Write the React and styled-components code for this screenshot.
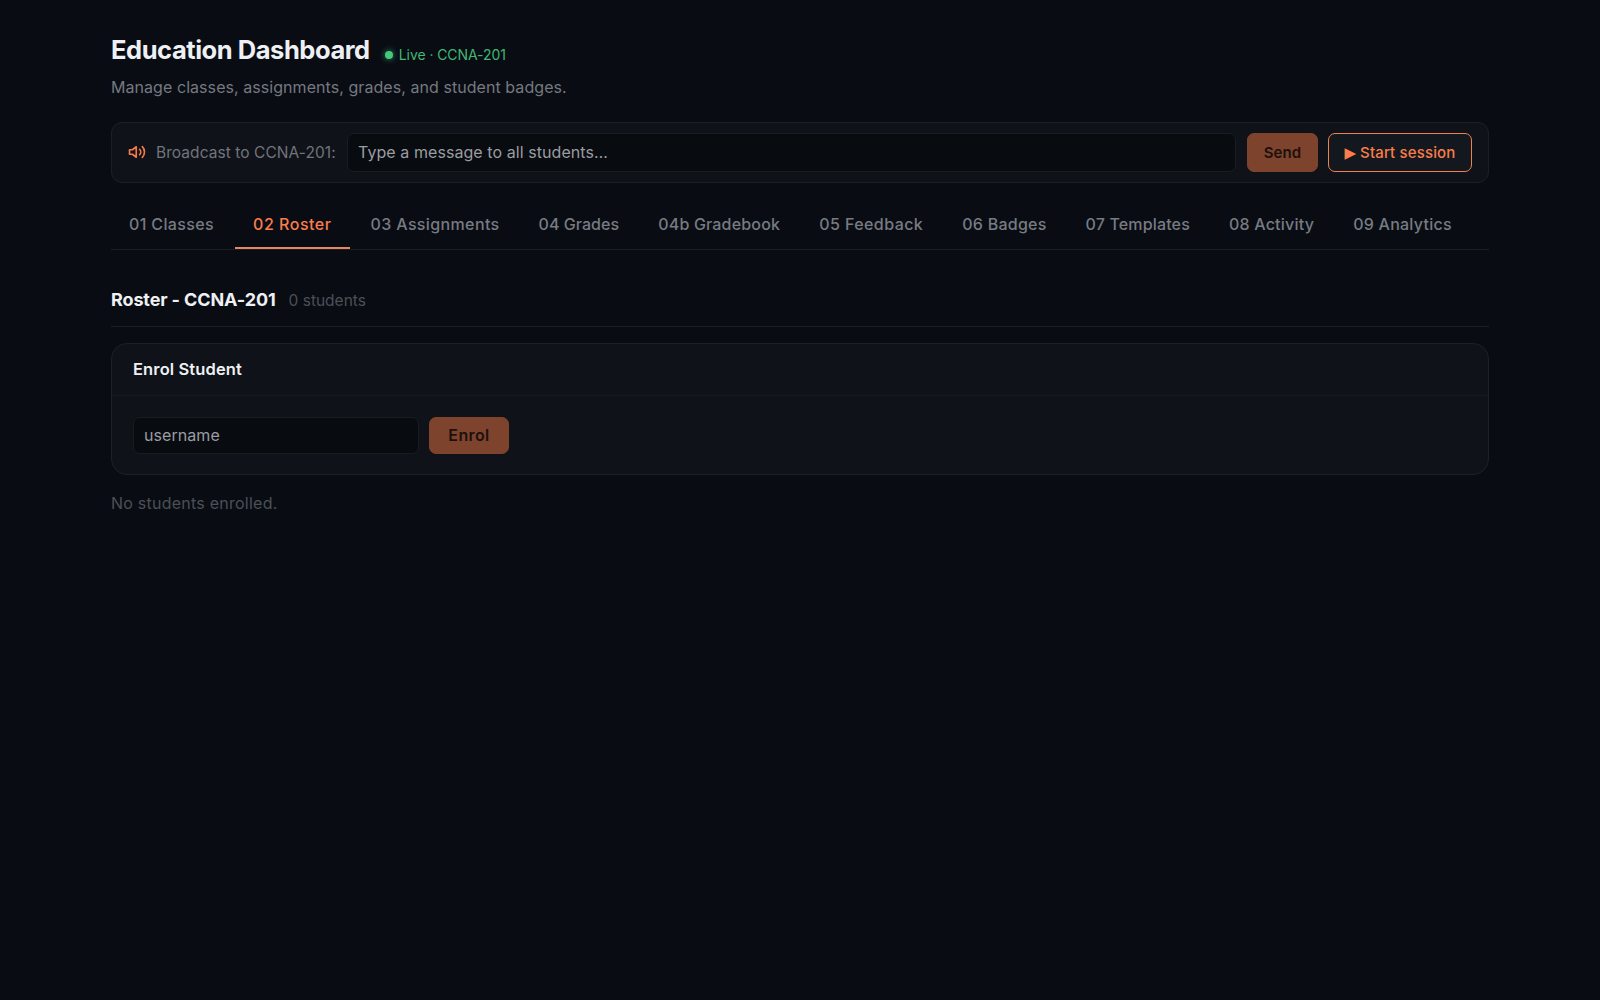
import React, { useState } from "react";
import styled, { createGlobalStyle } from "styled-components";

const GlobalStyle = createGlobalStyle`
  * {
    box-sizing: border-box;
  }
  body {
    margin: 0;
    background: #090c13;
    color: #eef0f3;
    font-family: Inter, sans-serif;
    font-size: 16px;
  }
  input, button {
    font-family: inherit;
    margin: 0;
  }
`;

const Page = styled.main`
  width: 1378px;
  min-height: 1000px;
  margin: 0 auto;
  padding-top: 34px;
`;

const TitleRow = styled.div`
  display: flex;
  align-items: baseline;
  height: 32px;
`;

const Title = styled.h1`
  margin: 0;
  font-size: 25.5px;
  font-weight: 650;
  line-height: 32px;
  letter-spacing: -0.45px;
`;

const Live = styled.span`
  display: inline-flex;
  align-items: center;
  gap: 6px;
  margin-left: 15px;
  font-size: 14px;
  line-height: 20px;
  letter-spacing: -0.07px;
  color: #3fb873;
`;

const Dot = styled.span`
  width: 8px;
  height: 8px;
  border-radius: 50%;
  background: #45c97c;
  box-shadow: 0 0 6px #2f9c5e;
`;

const Subtitle = styled.p`
  margin: 9px 0 0;
  line-height: 24px;
  letter-spacing: 0.06px;
  color: #757980;
`;

const Broadcast = styled.section`
  display: flex;
  align-items: center;
  height: 61px;
  margin-top: 23px;
  padding: 10px 16px;
  background: #0f1218;
  border: 1px solid #1d2023;
  border-radius: 11px;
`;

const BroadcastLabel = styled.label`
  width: 191px;
  margin-left: 10px;
  font-size: 15.5px;
  letter-spacing: 0.06px;
  white-space: nowrap;
  color: #71757c;
`;

const Input = styled.input`
  width: ${(p) => p.$width || "auto"};
  flex: ${(p) => (p.$width ? "none" : 1)};
  height: ${(p) => p.$height}px;
  padding: 0 10px 2px;
  background: #080b10;
  border: 1px solid #191c20;
  border-radius: 7px;
  outline: none;
  color: #eef0f3;
  font-size: 16px;
  letter-spacing: 0.07px;
  &::placeholder {
    color: #9b9da1;
    opacity: 1;
  }
`;

const Button = styled.button`
  display: flex;
  align-items: center;
  justify-content: center;
  width: ${(p) => p.$width}px;
  height: ${(p) => p.$height}px;
  margin-left: ${(p) => p.$gap || 10}px;
  padding: 0 0 ${(p) => p.$lift || 0}px;
  border: 1px solid ${(p) => (p.$outline ? "#ef8054" : "#7d432c")};
  border-radius: 7px;
  background: ${(p) => (p.$outline ? "#13181e" : "#7d432c")};
  color: ${(p) => (p.$outline ? "#fa7d4b" : "#1c100c")};
  font-size: ${(p) => p.$size || 15}px;
  font-weight: ${(p) => (p.$outline ? 500 : 600)};
  letter-spacing: ${(p) => p.$spacing}px;
  white-space: nowrap;
`;

const Play = styled.span`
  margin-right: 4px;
  font-family: "DejaVu Sans", sans-serif;
  letter-spacing: 0;
  line-height: 18px;
`;

const Tabs = styled.nav`
  display: flex;
  gap: 3px;
  height: 51px;
  margin-top: 16px;
  border-bottom: 1px solid #1b1e21;
`;

const Tab = styled.button`
  height: 50px;
  padding: 2px 18px 0;
  background: none;
  border: none;
  border-bottom: 2px solid ${(p) => (p.$active ? "#e88662" : "transparent")};
  color: ${(p) => (p.$active ? "#fa7d4b" : "#777b82")};
  font-size: 16px;
  font-weight: 530;
  letter-spacing: ${(p) => p.$spacing}px;
  white-space: nowrap;
`;

const SectionHead = styled.div`
  display: flex;
  align-items: baseline;
  gap: 13px;
  height: 77px;
  padding-top: 38px;
  border-bottom: 1px solid #1b1e21;
`;

const SectionTitle = styled.h2`
  margin: 0;
  font-size: 18px;
  font-weight: 650;
  line-height: 24px;
  letter-spacing: -0.12px;
`;

const Count = styled.span`
  font-size: 15.5px;
  letter-spacing: 0;
  color: #4c5057;
`;

const Card = styled.section`
  height: 132px;
  margin-top: 16px;
  background: #0f1218;
  border: 1px solid #1e2124;
  border-radius: 16px;
`;

const CardHead = styled.h3`
  display: flex;
  align-items: center;
  height: 52px;
  margin: 0;
  padding: 0 21px 2px;
  border-bottom: 1px solid #171b20;
  font-size: 16.5px;
  font-weight: 600;
  letter-spacing: 0.12px;
`;

const CardBody = styled.div`
  display: flex;
  padding: 21px;
`;

const Empty = styled.p`
  margin: 16px 0 0;
  line-height: 24px;
  letter-spacing: 0.24px;
  color: #4c5057;
`;

const Speaker = styled.svg`
  flex: none;
  margin-bottom: 2px;
`;

// label, letter spacing
const tabs = [
  ["01 Classes", 0.37],
  ["02 Roster", 0.52],
  ["03 Assignments", 0.37],
  ["04 Grades", 0.05],
  ["04b Gradebook", 0.18],
  ["05 Feedback", 0.43],
  ["06 Badges", 0.25],
  ["07 Templates", 0.15],
  ["08 Activity", 0.22],
  ["09 Analytics", 0.25],
];

function SpeakerIcon() {
  return (
    <Speaker
      width="18"
      height="18"
      viewBox="0 0 24 24"
      fill="none"
      stroke="#f47a49"
      strokeWidth="2.2"
      strokeLinecap="round"
      strokeLinejoin="round"
    >
      <polygon points="11 5 6 9 2 9 2 15 6 15 11 19 11 5" />
      <path d="M15.54 8.46a5 5 0 0 1 0 7.07" />
      <path d="M19.07 4.93a10 10 0 0 1 0 14.14" />
    </Speaker>
  );
}

export default function App() {
  const [active, setActive] = useState("02 Roster");
  const [message, setMessage] = useState("");
  const [username, setUsername] = useState("");

  return (
    <>
      <GlobalStyle />
      <Page>
        <TitleRow>
          <Title>Education Dashboard</Title>
          <Live>
            <Dot />
            Live · CCNA-201
          </Live>
        </TitleRow>
        <Subtitle>
          Manage classes, assignments, grades, and student badges.
        </Subtitle>

        <Broadcast>
          <SpeakerIcon />
          <BroadcastLabel htmlFor="message">
            Broadcast to CCNA-201:
          </BroadcastLabel>
          <Input
            id="message"
            $height={39}
            placeholder="Type a message to all students…"
            value={message}
            onChange={(e) => setMessage(e.target.value)}
          />
          <Button $width={71} $height={39} $gap={11} $spacing={0.1}>
            Send
          </Button>
          <Button $outline $width={144} $height={39} $spacing={0.15}>
            <Play>▶</Play>
            Start session
          </Button>
        </Broadcast>

        <Tabs>
          {tabs.map(([label, spacing]) => (
            <Tab
              key={label}
              $spacing={spacing}
              $active={label === active}
              onClick={() => setActive(label)}
            >
              {label}
            </Tab>
          ))}
        </Tabs>

        <SectionHead>
          <SectionTitle>Roster - CCNA-201</SectionTitle>
          <Count>0 students</Count>
        </SectionHead>

        <Card>
          <CardHead>Enrol Student</CardHead>
          <CardBody>
            <Input
              $width="286px"
              $height={37}
              placeholder="username"
              value={username}
              onChange={(e) => setUsername(e.target.value)}
            />
            <Button $width={80} $height={37} $size={16} $spacing={0.4} $lift={2}>
              Enrol
            </Button>
          </CardBody>
        </Card>
        <Empty>No students enrolled.</Empty>
      </Page>
    </>
  );
}
